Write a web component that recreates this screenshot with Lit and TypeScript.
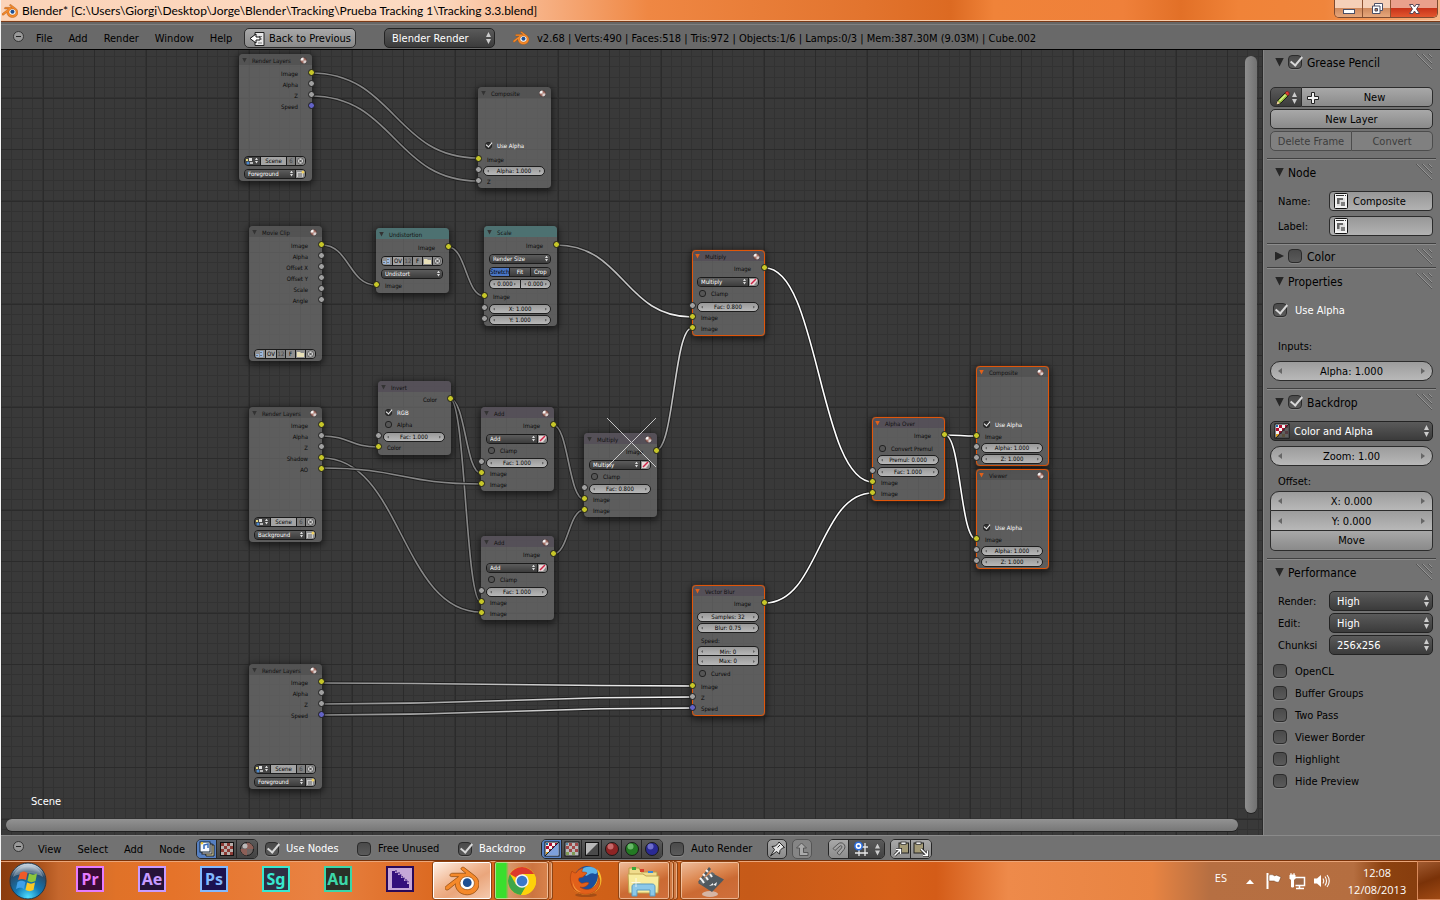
import { LitElement, html, svg, css, nothing } from "lit";
import { customElement, property } from "lit/decorators.js";
import { classMap } from "lit/directives/class-map.js";
import { styleMap } from "lit/directives/style-map.js";

/* ---------- shared icon drawings ---------- */

const blenderLogo = (size: number) => html`<svg width=${size} height=${size} viewBox="0 0 24 24" aria-hidden="true">
  <circle cx="15.7" cy="13" r="6" fill="#fff" />
  <path fill="#f5892a" stroke="#8a4408" stroke-width=".5" fill-rule="evenodd" d="M7.35 14.831c.006.314.106.922.256 1.398a7.372 7.372 0 0 0 1.593 2.757 8.227 8.227 0 0 0 2.787 2.001 8.947 8.947 0 0 0 3.66.76 8.964 8.964 0 0 0 3.657-.772 8.285 8.285 0 0 0 2.785-2.01 7.428 7.428 0 0 0 1.592-2.762 6.964 6.964 0 0 0 .25-3.074 7.123 7.123 0 0 0-1.016-2.779 7.764 7.764 0 0 0-1.852-2.043L13.566 2.55c-.492-.378-1.319-.376-1.86.002-.547.382-.609 1.015-.123 1.415l3.126 2.543-9.543.01c-.788.001-1.545.518-1.695 1.172-.154.665.38 1.217 1.2 1.22l4.83-.01-8.654 6.63c-.813.622-1.075 1.658-.563 2.315.52.667 1.625.668 2.447.004L7.414 14s-.069.52-.063.831zm12.09 1.741c-.97.988-2.326 1.548-3.795 1.55-1.47.004-2.827-.552-3.797-1.538a4.51 4.51 0 0 1-1.036-1.622 4.282 4.282 0 0 1 .282-3.519 4.702 4.702 0 0 1 1.153-1.371c.942-.768 2.141-1.183 3.396-1.185 1.256-.002 2.455.41 3.398 1.175.48.391.87.854 1.152 1.367a4.28 4.28 0 0 1 .522 1.706 4.236 4.236 0 0 1-.239 1.811 4.54 4.54 0 0 1-1.035 1.626" />
  <circle cx="15.7" cy="13.2" r="3.1" fill="#1d4f93" />
</svg>`;

const checker = (on: boolean) => svg`
  <rect x="1" y="1" width="14" height="14" fill=${on ? "#f4f4f4" : "#b9b9b9"} stroke="#111"/>
  <path fill=${on ? "#b01030" : "#a04848"} d="M5 2h3v3H5zM8 5h3v3H8zM2 5h3v3H2zM11 2h3v3h-3zM5 8h3v3H5zM11 8h3v3h-3z"/>
  <path fill=${on ? "#1c6fb4" : "#5c86a8"} d="M2 2h2v2H2z"/><path fill=${on ? "#e0a020" : "#7f9a55"} d="M2 11h3v3H2zM8 11h3v3H8z"/>`;

const icons: Record<string, unknown> = {
  back: svg`<path d="M6 1.500h9v13H6z" fill="#e9e9e9" stroke="#222"/><path d="M10 5.500h3M9 8h4M9 12h4" stroke="#777"/><path d="M7 3 1 7.500 7 12V9h4V6H7z" fill="#fff" stroke="#111"/>`,
  pencil: svg`<path d="M1.500 14.500 3 10l7.500-7.500 3 3L6 13z" fill="#93b83c" stroke="#1a1a1a"/><path d="m1.500 14.500 1-3.500 2.500 2.500z" fill="#f1d3a0"/><path d="m10 3 1.500-1.500c1.500-.6 3.200 1 2.700 2.700L13 6z" fill="#d83a35" stroke="#5c1010" stroke-width=".6"/><path d="m4.500 11 6-6" stroke="#dcef8d" stroke-width="1.300"/>`,
  plus: svg`<path d="M6.500 2.500h3v4h4v3h-4v4h-3v-4h-4v-3h4z" fill="#f2f2f2" stroke="#222"/>`,
  node: svg`<rect x="1.500" y=".5" width="13" height="15" rx="1" fill="#f3f3f3" stroke="#111"/><path d="M3 2.500h8M12 2.500h1" stroke="#333"/><path d="M4 5h8v8H4z" fill="#ddd"/><path d="M4 5h6v2H6.500v4H4z" fill="#666"/><path d="M8 9h4v4H8z" fill="#808080"/>`,
  coloralpha: svg`${checker(true)}<path d="M15 1v14H2z" fill="#444" opacity=".85"/><path d="M15 1 2 15" stroke="#222"/>`,
  images: svg`<path d="M5 4h10v11H7z" fill="#e8e0a8" stroke="#222"/><rect x="3" y="3" width="10" height="10" fill="#ddd" stroke="#222"/><rect x="1" y="1" width="10" height="10" fill="#f4f8ff" stroke="#123"/><path d="M5 8V4l4-1v4" fill="none" stroke="#3569b8" stroke-width="1.500"/><path d="m2 2.500 2-.5" stroke="#ecc52b" stroke-width="2"/>`,
  texture: svg`<rect x="1.500" y="1.500" width="13" height="13" fill="#b9b0ac" stroke="#111"/><path fill="#8b3a34" d="M2 2h3v3H2zM8 2h3v3H8zM5 5h3v3H5zM11 5h3v3h-3zM2 8h3v3H2zM8 8h3v3H8zM5 11h3v3H5zM11 11h3v3h-3z"/>`,
  sphere: svg`<circle cx="8" cy="8" r="6.500" fill="#6d6462" stroke="#1a1a1a"/><path d="M8 1.500A6.500 6.500 0 0 1 14.500 8H8zM8 8v6.500A6.500 6.500 0 0 1 1.500 8z" fill="#8c5f57"/><circle cx="6" cy="5" r="2.500" fill="#ddd" opacity=".7"/>`,
  alphatri: svg`${checker(true)}<path d="M14.500 2v12.500H2z" fill="#7da0dc"/><path d="M15 1 1 15" stroke="#123"/>`,
  checks: svg`${checker(false)}`,
  bw: svg`<rect x="1.500" y="1.500" width="13" height="13" fill="#4a4a4a" stroke="#111"/><path d="M2 2h12L2 14z" fill="#b9b9b9"/>`,
  red: svg`<circle cx="8" cy="8" r="6.500" fill="#8e2424" stroke="#1a1a1a"/><circle cx="6.500" cy="5.500" r="3" fill="#d98080" opacity=".75"/>`,
  green: svg`<circle cx="8" cy="8" r="6.500" fill="#237a23" stroke="#1a1a1a"/><circle cx="6.500" cy="5.500" r="3" fill="#80cc80" opacity=".75"/>`,
  blue: svg`<circle cx="8" cy="8" r="6.500" fill="#2a2a94" stroke="#1a1a1a"/><circle cx="6.500" cy="5.500" r="3" fill="#8585dd" opacity=".75"/>`,
  pin: svg`<path d="M10 1 15.500 6.500 13.500 7 11 9.500 10.500 13 7.500 10.500 1.500 15 5.500 8.500 3 5.500 6.500 5 9 2.500z" fill="#e6e6e6" stroke="#222"/><path d="m8.500 6.500 2.500-2.500" stroke="#222"/>`,
  up: svg`<path d="M7.500 2 2.500 7H5.500V14.500H14V11.500H9.500V7H12.500z" fill="#aaa" stroke="#555"/>`,
  magnet: svg`<path d="M2 7.500 7 3C11-.5 16 4.500 13 8.500L8.500 14 6 12l4.500-5C11.500 5 10 4 9 5L4 9.500z" fill="#a5a5a5" stroke="#555"/>`,
  snap: svg`<path d="M6 2v13M12 2v13M2 6h13M2 12h13" stroke="#e8e8e8" stroke-width="1.300"/><circle cx="5.500" cy="5" r="3.700" fill="#fff" stroke="#2a6ad8" stroke-width="1.600"/><circle cx="5.500" cy="5" r="1.300" fill="#2a6ad8"/>`,
  copy: svg`<rect x="6" y="2" width="9.500" height="10" fill="#a39a76" stroke="#222"/><rect x="8" y="1" width="5" height="2.500" fill="#eee" stroke="#222" stroke-width=".7"/><path d="M1.500 14.500 7 9M3 8.500h4.500V13" fill="none" stroke="#222" stroke-width="3"/><path d="M1.500 14.500 7 9M3 8.500h4.500V13" fill="none" stroke="#fff" stroke-width="1.500"/>`,
  paste: svg`<rect x="1" y="2" width="9.500" height="10" fill="#a39a76" stroke="#222"/><rect x="3" y="1" width="5" height="2.500" fill="#eee" stroke="#222" stroke-width=".7"/><path d="m8 8 6 6M14.500 9.500v5H10" fill="none" stroke="#222" stroke-width="3"/><path d="m8 8 6 6M14.500 9.500v5H10" fill="none" stroke="#fff" stroke-width="1.500"/>`,
};
const icon = (name: string) => html`<svg class="icon" width="16" height="16" viewBox="0 0 16 16" aria-hidden="true">${icons[name]}</svg>`;

/* ---------- node data ---------- */

type Row =
  | { t: "gap"; h: number }
  | { t: "fill" }
  | { t: "out" | "in"; s: string; c: string }
  | { t: "num"; s: string; sock?: boolean; part?: string }
  | { t: "sel"; s: string; ic?: string }
  | { t: "check"; s: string; on?: boolean }
  | { t: "text"; s: string }
  | { t: "scene" | "clip" | "modes" | "pair" };

const gap = (h: number): Row => ({ t: "gap", h });
const fill: Row = { t: "fill" };
const out = (s: string, c = "y"): Row => ({ t: "out", s, c });
const inp = (s: string, c = "y"): Row => ({ t: "in", s, c });
const num = (s: string, sock = false, part = ""): Row => ({ t: "num", s, sock, part });
const sel = (s: string, ic = ""): Row => ({ t: "sel", s, ic });
const check = (s: string, on = false): Row => ({ t: "check", s, on });

interface NodeDef {
  x: number; y: number; h: number; title: string;
  tint?: string; selected?: boolean; badge?: boolean; rows: Row[];
}

const layerNode = (x: number, y: number, h: number, lead: number, outs: Row[], pass: string): NodeDef => ({
  x, y, h, title: "Render Layers", tint: "plain", badge: true,
  rows: [gap(lead), ...outs, fill, { t: "scene" }, gap(2), sel(pass, "clap"), gap(2)],
});
const mixNode = (x: number, y: number, title: string, fac: string, selected = false): NodeDef => ({
  x, y, h: selected ? 86 : 84, title, tint: "color", badge: true, selected,
  rows: [gap(2), out("Image"), gap(2), sel(title, "img"), gap(1), check("Clamp"), gap(selected ? 2 : 1),
    num(fac, true), inp("Image"), inp("Image")],
});
const targetNode = (y: number, title: string): NodeDef => ({
  x: 976, y, h: 100, title, tint: "plain", badge: true, selected: true,
  rows: [fill, check("Use Alpha", true), gap(1), inp("Image"), num("Alpha: 1.000", true), num("Z: 1.000", true), gap(2)],
});

const NODES: NodeDef[] = [
  layerNode(239, 54, 127, 3, [out("Image"), out("Alpha", "g"), out("Z", "g"), out("Speed", "b")], "Foreground"),
  { x: 478, y: 87, h: 101, title: "Composite", tint: "plain", badge: true,
    rows: [fill, check("Use Alpha", true), gap(3), inp("Image"), num("Alpha: 1.000", true), inp("Z", "g"), gap(1)] },
  { x: 249, y: 226, h: 135, title: "Movie Clip", tint: "plain", badge: true,
    rows: [gap(3), out("Image"), out("Alpha", "g"), out("Offset X", "g"), out("Offset Y", "g"), out("Scale", "g"),
      out("Angle", "g"), fill, { t: "clip" }, gap(2)] },
  { x: 376, y: 228, h: 65, title: "Undistortion", tint: "distort",
    rows: [gap(3), out("Image"), gap(2), { t: "clip" }, gap(2), sel("Undistort"), gap(1), inp("Image")] },
  { x: 484, y: 226, h: 100, title: "Scale", tint: "distort",
    rows: [gap(3), out("Image"), gap(2), sel("Render Size"), gap(2), { t: "modes" }, gap(1), { t: "pair" }, gap(2),
      inp("Image"), gap(1), num("X: 1.000", true), num("Y: 1.000", true)] },
  layerNode(249, 407, 135, 2, [out("Image"), out("Alpha", "g"), out("Z", "g"), out("Shadow"), out("AO")], "Background"),
  { x: 378, y: 381, h: 74, title: "Invert", tint: "color",
    rows: [gap(2), out("Color"), gap(2), check("RGB", true), gap(1), check("Alpha"), gap(1), num("Fac: 1.000", true), inp("Color")] },
  mixNode(481, 407, "Add", "Fac: 1.000"),
  mixNode(481, 536, "Add", "Fac: 1.000"),
  mixNode(584, 433, "Multiply", "Fac: 0.800"),
  mixNode(692, 250, "Multiply", "Fac: 0.800", true),
  { x: 872, y: 417, h: 84, title: "Alpha Over", tint: "color", selected: true,
    rows: [gap(2), out("Image"), gap(2), check("Convert Premul"), num("Premul: 0.000"), gap(1), num("Fac: 1.000", true),
      inp("Image"), inp("Image")] },
  targetNode(366, "Composite"),
  targetNode(469, "Viewer"),
  { x: 692, y: 585, h: 131, title: "Vector Blur", tint: "color", selected: true,
    rows: [gap(2), out("Image"), gap(2), num("Samples: 32"), num("Blur: 0.75"), gap(2), { t: "text", s: "Speed:" },
      num("Min: 0", false, "top"), num("Max: 0", false, "bottom"), gap(2), check("Curved"), gap(2),
      inp("Image"), inp("Z", "g"), inp("Speed", "b")] },
  layerNode(249, 664, 125, 2, [out("Image"), out("Alpha", "g"), out("Z", "g"), out("Speed", "b")], "Foreground"),
];

/* x1, y1, x2, y2, whether each end is highlighted */
const LINKS: [number, number, number, number, number, number][] = [
  [311, 73, 478, 158, 0, 0], [311, 96, 478, 181, 0, 0],
  [322, 245, 376, 285, 0, 0], [448, 247, 484, 296, 0, 0],
  [556, 245, 692, 317, 0, 1], [656, 450, 692, 328, 0, 1],
  [450, 399, 481, 473, 0, 0], [450, 399, 481, 602, 0, 0],
  [322, 436, 378, 447, 0, 0], [322, 458, 481, 612, 0, 0], [322, 468, 481, 484, 0, 0],
  [553, 425, 584, 499, 0, 0], [553, 554, 584, 510, 0, 0],
  [765, 268, 873, 482, 1, 1], [765, 603, 873, 493, 1, 1],
  [945, 435, 976, 436, 1, 1], [945, 435, 976, 539, 1, 1],
  [322, 683, 692, 686, 0, 1], [322, 704, 692, 697, 0, 1], [322, 715, 692, 708, 0, 1],
];

/* ---------- node element ---------- */

@customElement("comp-node")
export class CompNode extends LitElement {
  @property({ attribute: false }) def!: NodeDef;

  static styles = css`
    :host { display: block; }
    * { box-sizing: border-box; }
    .node {
      position: relative; display: flex; flex-direction: column; width: 73px; height: 100%;
      border-radius: 4px; background: rgba(108, 108, 108, .7); color: #080808;
      font: 6px/11px "DejaVu Sans Condensed", "DejaVu Sans", sans-serif;
      box-shadow: 0 2px 6px 2px rgba(0, 0, 0, .5);
    }
    .selected::after { content: ""; position: absolute; inset: 0; border: 1px solid #e0560a; border-radius: 4px; box-shadow: 0 0 1px #d9560c; pointer-events: none; }
    .head {
      display: flex; align-items: center; gap: 5px; height: 11px; flex: none; padding: 1px 5px 0 3px;
      border-radius: 4px 4px 0 0; color: #111;
    }
    .plain { background: rgba(70, 70, 70, .4); }
    .color { background: rgba(78, 70, 84, .55); }
    .distort { background: rgba(72, 120, 120, .75); }
    .tri { width: 5px; height: 5px; background: #333; clip-path: polygon(0 0, 100% 0, 50% 100%); }
    .selected .tri { background: #e0601a; }
    .title { flex: 1; white-space: nowrap; }
    .row { position: relative; display: flex; align-items: center; height: 11px; flex: none; padding: 0 6px 0 5px; white-space: nowrap; }
    .fill { flex: 1; }
    .out { justify-content: flex-end; padding-right: 14px; }
    .in, .text { padding-left: 9px; }
    .sock { position: absolute; z-index: 1; top: 1px; width: 7px; height: 7px; border: 1px solid #1c1c1c; border-radius: 50%; }
    .left { left: -3px; }
    .right { right: -3px; }
    .y { background: #c7c729; } .g { background: #a1a1a1; } .b { background: #6363c7; }
    input, select, button { font: inherit; line-height: 8px; margin: 0; min-width: 0; }
    .num { position: relative; display: flex; width: 100%; height: 10px; }
    .num input {
      width: 100%; height: 100%; padding: 0; text-align: center; color: #000; border: 1px solid #1e1e1e;
      border-radius: 5px; background: linear-gradient(#999, #b8b8b8);
    }
    .num::before, .num::after { content: ""; position: absolute; top: 4px; width: 2px; height: 3px; background: #666; }
    .num::before { left: 4px; clip-path: polygon(100% 0, 100% 100%, 0 50%); }
    .num::after { right: 4px; clip-path: polygon(0 0, 100% 50%, 0 100%); }
    .tight { height: 10px; }
    .top input { border-radius: 4px 4px 0 0; }
    .bottom input { border-radius: 0 0 4px 4px; border-top: 0; }
    .start input { border-radius: 5px 0 0 5px; border-right: 0; }
    .end input { border-radius: 0 5px 5px 0; }
    .strip {
      display: flex; width: 100%; height: 10px; border: 1px solid #1b1b1b; border-radius: 4px; overflow: hidden;
      background: #444;
    }
    .strip > * { border: 0; border-left: 1px solid #1b1b1b; padding: 0; border-radius: 0; height: 8px; flex: none; }
    .strip > *:first-child { border-left: 0; }
    .drop { position: relative; flex: 1; display: flex; }
    .drop select {
      width: 100%; height: 8px; border: 0; border-radius: 0; padding: 0 8px 0 3px; appearance: none; color: #fff;
      background: linear-gradient(#5c5c5c, #3c3c3c);
    }
    .ud { position: absolute; right: 2px; top: 1px; width: 3px; height: 6px; background: #ddd;
      clip-path: polygon(50% 0, 100% 40%, 0 40%, 0 60%, 100% 60%, 50% 100%, 0 60%, 0 40%); }
    .pick { position: relative; width: 15px; background: #454545; }
    .field { flex: 1 1 0; width: 20px; background: #a4a4a4; color: #000; text-align: center; }
    .dim { width: 9px; background: #808080; color: #444; }
    .btn { width: 10px; background: #8e8e8e; color: #000; text-align: center; }
    .mini { display: block; width: 9px; height: 8px; }
    .modes > * { flex: 1; width: 0; background: linear-gradient(#5c5c5c, #3c3c3c); color: #fff; text-align: center; overflow: hidden; }
    .modes > .on { background: #4a76c4; color: #000; }
    .tick { display: flex; align-items: center; gap: 5px; padding-left: 2px; }
    .tick input {
      appearance: none; position: relative; width: 7px; height: 7px; border: 1px solid #222; border-radius: 3px; background: #555;
    }
    .tick input:checked { background: #333; }
    .tick input:checked::after {
      content: ""; position: absolute; left: 1px; top: -2px; width: 3px; height: 5px;
      border: solid #eee; border-width: 0 1px 1px 0; transform: rotate(40deg);
    }
    .tick input:checked + span { color: #fff; }
  `;

  private mini(kind: string) {
    const body: Record<string, unknown> = {
      img: svg`<path d="M1 1h7v6H1z" fill="#e8d8d8"/><path d="M5 7h3V3z" fill="#888"/><path d="M2 6 7 1" stroke="#c24" stroke-width="1.500"/>`,
      clap: svg`<rect x="1" y="2" width="6" height="5" fill="#ccc"/><path d="M2 4h4M2 6h4" stroke="#444" stroke-width=".8"/><circle cx="7" cy="2" r="1.500" fill="#f0d060"/>`,
      scene: svg`<path d="M1 2h2v2H1z" fill="#e4d87a"/><path d="M4 1h3v3H4z" fill="#ddd"/><circle cx="3" cy="6" r="1.500" fill="#4b8ad0"/><path d="M5 5h3v2H5z" fill="#bbb"/>`,
      clip: svg`<path d="M1 4h3v3H1zM5 1h3v6H5z" fill="#9bb8dd"/><path d="M2 5v1M6 2v1M6 5v1" stroke="#333"/>`,
      open: svg`<path d="M1 2h3l1 1h3v4H1z" fill="#e8e0b8"/>`,
      x: svg`<circle cx="4.500" cy="4" r="3.200" fill="#ccc" stroke="#333" stroke-width=".6"/><path d="m3 2.500 3 3M6 2.500l-3 3" stroke="#333" stroke-width=".9"/>`,
    };
    return html`<svg class="mini" viewBox="0 0 9 8" aria-hidden="true">${body[kind]}</svg>`;
  }

  private number(s: string, part = "") {
    return html`<span class="num ${part}"><input type="text" aria-label=${s} .value=${s} /></span>`;
  }

  private row(r: Row) {
    switch (r.t) {
      case "gap": return html`<div style=${styleMap({ height: `${r.h}px` })}></div>`;
      case "fill": return html`<div class="fill"></div>`;
      case "out": return html`<div class="row out">${r.s}<i class="sock right ${r.c}"></i></div>`;
      case "in": return html`<div class="row in"><i class="sock left ${r.c}"></i>${r.s}</div>`;
      case "text": return html`<div class="row text">${r.s}</div>`;
      case "num": return html`<div class="row ${r.part ? "tight" : ""}">
        ${r.sock ? html`<i class="sock left g"></i>` : nothing}${this.number(r.s, r.part)}</div>`;
      case "sel": return html`<div class="row"><div class="strip">
        <span class="drop"><select aria-label=${r.s}><option>${r.s}</option></select><i class="ud"></i></span>
        ${r.ic ? html`<button class="btn" aria-label="Browse">${this.mini(r.ic)}</button>` : nothing}</div></div>`;
      case "check": return html`<label class="row"><span class="tick">
        <input type="checkbox" .checked=${!!r.on} /><span>${r.s}</span></span></label>`;
      case "scene": return html`<div class="row"><div class="strip">
        <button class="pick" aria-label="Browse scene">${this.mini("scene")}<i class="ud"></i></button>
        <input class="field" aria-label="Scene" value="Scene" /><button class="dim">6</button>
        <button class="btn" aria-label="Unlink">${this.mini("x")}</button></div></div>`;
      case "clip": return html`<div class="row"><div class="strip">
        <button class="btn" aria-label="Browse clip">${this.mini("clip")}</button>
        <input class="field" aria-label="Clip" value="OV" /><button class="dim">12</button>
        <button class="btn">F</button><button class="btn" aria-label="Open">${this.mini("open")}</button>
        <button class="btn" aria-label="Unlink">${this.mini("x")}</button></div></div>`;
      case "modes": return html`<div class="row"><div class="strip modes">
        <button class="on">Stretch</button><button>Fit</button><button>Crop</button></div></div>`;
      case "pair": return html`<div class="row">${this.number("0.000", "start")}${this.number("0.000", "end")}</div>`;
    }
  }

  render() {
    const d = this.def;
    return html`<div class=${classMap({ node: true, selected: !!d.selected })}>
      <div class="head ${d.tint ?? "plain"}">
        <i class="tri"></i><span class="title">${d.title}</span>
        ${d.badge ? html`<svg width="7" height="7" viewBox="0 0 7 7" aria-hidden="true">
          <circle cx="3.500" cy="3.500" r="3" fill="#a8746a" stroke="#3a2a2a" stroke-width=".6" />
          <path d="M3.500.5a3 3 0 0 0-3 3h3z" fill="#f4f4f4" /><path d="M3.500 6.500a3 3 0 0 0 3-3h-3z" fill="#d8d0d0" /></svg>` : nothing}
      </div>
      ${d.rows.map((r) => this.row(r))}
    </div>`;
  }
}

/* ---------- application ---------- */

const ORIGIN = { x: 1, y: 50 };

@customElement("app-root")
export class AppRoot extends LitElement {
  static styles = css`
    :host {
      display: flex; flex-direction: column; height: 100vh; overflow: hidden; border-left: 1px solid #f4f4f4;
      box-sizing: border-box; background: #727272; color: #000;
      font: 11px/20px "DejaVu Sans Condensed", "DejaVu Sans", sans-serif;
    }
    * { box-sizing: border-box; }
    button, input, select { font: inherit; color: inherit; margin: 0; min-width: 0; }
    a { color: inherit; text-decoration: none; }
    .icon { display: block; flex: none; }

    /* window title */
    .titlebar {
      display: flex; align-items: center; height: 22px; flex: none; padding-left: 1px; gap: 4px;
      font: 12px/20px "Lato", "Open Sans", sans-serif; border-bottom: 1px solid #7a3a18;
      background: linear-gradient(90deg, #fbd3b8 0, #fcdac2 30%, #f6ae80 38%, #ef8743 45%, #e2742e 60%, #dc6a22 66%, #f08339 69%, #ef803a 78%, #e27027 82%, #f08338 86%, #f0853c 92%, #f7b688 100%);
      box-shadow: inset 0 -1px #f9cba8;
    }
    .titlebar .name { flex: 1; }
    .winbtns { display: flex; align-self: flex-start; height: 18px; margin-right: 2px; border: 1px solid #7d4a30; border-top: 0; border-radius: 0 0 5px 5px; overflow: hidden; }
    .winbtns button { width: 28px; border: 0; border-right: 1px solid #8d5232; padding: 0; display: grid; place-items: center; background: linear-gradient(#f5d0b8 0 45%, #cf8a5e 50%, #e6a77c); }
    .winbtns .close { width: 46px; border-right: 0; background: linear-gradient(#eaa08c 0 45%, #c8341a 50%, #e2572f); }

    /* header strips */
    .bar { display: flex; align-items: center; flex: none; padding-left: 12px; }
    .info { height: 28px; padding-top: 5px; background: linear-gradient(#666 2px, #808080 2px 3px, #696969 3px); border-bottom: 1px solid #000; }
    .footer { height: 25px; background: #727272; border-top: 1px solid #8a8a8a; padding-top: 1px; }
    .collapse { width: 11px; height: 11px; flex: none; margin-bottom: 4px; padding: 0; border: 1px solid #333; border-radius: 50%; background: #999; position: relative; }
    .collapse::after { content: ""; position: absolute; left: 2px; top: 4px; width: 5px; height: 1px; background: #222; }
    .menus { display: flex; gap: 16px; padding: 2px 0 0 12px; }
    .info .menus { width: 220px; }
    .footmenus { padding-left: 14px; width: 172px; }
    .btn {
      display: flex; align-items: center; justify-content: center; gap: 4px; height: 20px; padding: 1px 4px 0;
      border: 1px solid #2c2c2c; border-radius: 5px; background: linear-gradient(#a8a8a8, #8a8a8a); white-space: nowrap;
    }
    .back { width: 112px; padding: 1px 2px 0; }
    .engine { width: 111px; margin: 0 18px 0 28px; }
    .stats { padding: 2px 0 0 8px; white-space: nowrap; }
    .dropdown { position: relative; display: flex; height: 20px; color: #fff; }
    .dropdown select {
      appearance: none; width: 100%; height: 20px; padding: 2px 16px 0 7px; border: 1px solid #232323; border-radius: 5px;
      background: linear-gradient(#5a5a5a, #3b3b3b); line-height: 16px;
    }
    .ud { position: absolute; right: 4px; top: 4px; width: 5px; height: 12px; background: #ccc;
      clip-path: polygon(50% 0, 100% 42%, 0 42%, 0 58%, 100% 58%, 50% 100%, 0 58%, 0 42%); }

    .tick { display: flex; align-items: center; gap: 7px; height: 20px; white-space: nowrap; }
    .tick span { padding-top: 1px; }
    .tick input {
      appearance: none; position: relative; flex: none; width: 14px; height: 14px; border: 1px solid #2b2b2b; border-radius: 4px;
      background: linear-gradient(#4a4a4a, #5a5a5a); box-shadow: 0 1px #858585;
    }
    .tick input:checked::after {
      content: ""; position: absolute; left: 4px; top: -2px; width: 5px; height: 10px;
      border: solid #d8d8d8; border-width: 0 2px 2px 0; transform: rotate(40deg);
    }
    .lit { color: #fff; }
    .group { display: flex; height: 20px; border: 1px solid #262626; border-radius: 5px; overflow: hidden; }
    .group button { display: grid; place-items: center; width: 20px; padding: 0; border: 0; border-right: 1px solid #262626; background: linear-gradient(#5a5a5a, #424242); }
    .group button:last-child { border-right: 0; }
    .group .on { background: #5680c2; }
    .group .pale { background: linear-gradient(#a8a8a8, #8c8c8c); }
    .group .wide { position: relative; width: 35px; padding-right: 12px; }
    .square { width: 20px; padding: 0; }
    .faint { border-color: #555; background: #858585; }
    .t92 { width: 92px; } .t101 { width: 101px; } .t83 { width: 83px; } .t97 { width: 97px; }
    .gap7 { margin-left: 7px; } .gap5 { margin-left: 5px; } .gap16 { margin-left: 16px; }

    /* editor */
    .main { display: flex; flex: 1; min-height: 0; }
    .editor { position: relative; flex: 1; min-width: 0; overflow: hidden; background: #393939; }
    .layer { position: absolute; inset: 0; width: 100%; height: 100%; pointer-events: none; }
    .editor comp-node { position: absolute; }
    .scene { position: absolute; left: 30px; bottom: 23px; color: #fff; }
    .scroll { position: absolute; border-radius: 6px; }
    .vert { right: 5px; top: 6px; bottom: 22px; width: 12px; background: linear-gradient(90deg, #8e8e8e, #717171); box-shadow: 0 1px #222; }
    .horz { left: 5px; right: 24px; bottom: 4px; height: 12px; background: linear-gradient(#929292, #777); box-shadow: 0 1px #222; }

    /* properties region */
    .side { width: 178px; flex: none; overflow: hidden; background: #727272; border-left: 1px solid #2a2a2a; box-shadow: inset 1px 0 #858585; }
    .panel { margin: 0 4px 1px; padding: 0 3px 7px; border-bottom: 1px solid #404040; box-shadow: 0 1px #8c8c8c; }
    .panel:last-child { border-bottom: 0; box-shadow: none; }
    .closed { padding-bottom: 0; }
    .phead { display: flex; align-items: center; gap: 4px; height: 24px; padding-left: 5px; position: relative; font-size: 12px; }
    .phead > span { padding-top: 1px; }
    .closed .phead { height: 22px; }
    .phead .tick { gap: 5px; }
    .arrow { width: 9px; height: 9px; background: #262626; clip-path: polygon(0 0, 100% 0, 50% 100%); }
    .shut { clip-path: polygon(0 0, 100% 50%, 0 100%); }
    .grip { position: absolute; right: 0; top: 3px; }
    .pbody { display: grid; gap: 2px; padding-top: 7px; }
    .roomy { padding-top: 13px; }
    .loose { gap: 5px; }
    .join { display: flex; }
    .join .btn { flex: 1; }
    .join > :first-child { border-radius: 5px 0 0 5px; }
    .join > :last-child { border-radius: 0 5px 5px 0; border-left: 0; }
    .join .brush { position: relative; flex: none; width: 32px; justify-content: flex-start; background: linear-gradient(#5a5a5a, #3b3b3b); }
    .join .new { padding-left: 3px; }
    .new span { flex: 1; padding-right: 4px; }
    .off { color: #3d3d3d; background: #808080; border-color: #4c4c4c; }
    .field { display: grid; grid-template-columns: 51px 1fr; padding-left: 8px; align-items: center; white-space: nowrap; }
    .field > span:first-child { overflow: hidden; padding-top: 1px; height: 20px; }
    .id { position: relative; display: flex; }
    .id .icon { position: absolute; left: 4px; top: 2px; }
    .id input { width: 100%; height: 20px; padding: 1px 4px 0 23px; border: 1px solid #2c2c2c; border-radius: 4px; background: linear-gradient(#979797, #b2b2b2); }
    .num { position: relative; display: flex; height: 20px; }
    .num input { width: 100%; height: 20px; padding: 2px 0 0; text-align: center; border: 1px solid #2c2c2c; border-radius: 10px; background: linear-gradient(#9c9c9c, #b8b8b8); }
    .num::before, .num::after { content: ""; position: absolute; top: 7px; width: 4px; height: 6px; background: #666; }
    .num::before { left: 8px; clip-path: polygon(100% 0, 100% 100%, 0 50%); }
    .num::after { right: 8px; clip-path: polygon(0 0, 100% 50%, 0 100%); }
    .stack { display: grid; }
    .stack .first input { border-radius: 9px 9px 0 0; }
    .stack .mid input { border-radius: 0; border-top: 0; }
    .stack .btn { border-radius: 0 0 5px 5px; border-top: 0; }
    .label { padding: 1px 0 0 8px; height: 20px; }
    .indent { padding-left: 3px; }
    .inputs { padding-top: 12px; height: 31px; }
    .withicon select { padding-left: 23px; }
    .withicon .icon { position: absolute; left: 4px; top: 2px; z-index: 1; }
    .checks { display: grid; gap: 2px; padding: 4px 0 0 3px; }
    .checks .tick, .indent { gap: 8px; }

    /* taskbar */
    .taskbar {
      display: flex; align-items: center; height: 40px; flex: none; border-top: 1px solid #7a3208;
      box-shadow: inset 0 1px #eaa67a; color: #fff; font: 12px/17px "Open Sans", sans-serif;
      background: linear-gradient(90deg, #8a3c0e 0, #9b4612 2%, #c5672d 4%, #e07228 8%, #e5732a 12%, #e98242 22%, #dc6a22 30%, #cf6018 42%, #c65a18 52%, #d66019 62%, #d45c18 65%, #ee8a4a 70%, #e88442 80%, #b66f42 84%, #b56e40 94%, #8c4210 96%, #843a0c 100%);
    }
    .orb { width: 38px; height: 38px; margin: 0 29px 0 8px; padding: 0; border: 0; background: none; }
    .apps { display: flex; gap: 34px; margin: 0 18px 3px 0; }
    .adobe {
      display: grid; place-items: center; width: 28px; height: 26px; padding: 0; border: 2px solid;
      font: bold 16px/20px "Noto Sans", "Open Sans", sans-serif;
    }
    .pr { color: #e57bff; background: #3a0b35; } .ae { color: #c89bff; background: #261338; }
    .ps { color: #82b9ff; background: #1c1250; } .sg { color: #38e8d0; background: #2f2f45; }
    .au { color: #3cd6a8; background: #2a2f28; } .me { border-color: #2a0a58; background: #c6a8d8; }
    .task { display: grid; place-items: center; height: 39px; padding: 0; border: 1px solid #8d4313; border-radius: 3px; box-shadow: inset 0 0 0 1px rgba(255, 225, 200, .6); background: linear-gradient(160deg, #eebd9c, #dc8750 40%, #cb6a33 60%, #d0703c); }
    .active { width: 60px; background: linear-gradient(150deg, #fff2e8, #f0b48e 45%, #eaa67c 60%, #f5cbb0); box-shadow: inset 0 0 0 1px #fff; }
    .chrome { width: 55px; margin-left: 2px; background: linear-gradient(90deg, #3adf2d 0 20%, #d9966a 26%, #cc7440 70%, #d8834c); }
    .edge { width: 4px; height: 39px; border: 1px solid #8d4313; border-left: 0; border-radius: 0 3px 3px 0; box-shadow: inset -1px 0 rgba(255, 225, 200, .5); background: #d07a44; }
    .plainapp { width: 65px; height: 39px; padding: 0; border: 0; background: none; display: grid; place-items: center; }
    .files { width: 52px; } .clap { width: 60px; margin-left: 2px; }
    .tray { display: flex; align-items: center; margin-left: auto; height: 100%; }
    .tray .lang { margin-right: 15px; padding-bottom: 6px; font-size: 11px; }
    .tray svg { display: block; margin-right: 7px; }
    .clock { width: 78px; text-align: center; margin-left: 1px; font-size: 11px; }
    .desk { width: 23px; height: 39px; margin-left: 1px; padding: 0; border: 1px solid #d98a5c; border-right: 0; background: linear-gradient(160deg, #a05a30, #7a3208 50%, #a04a14); }
  `;

  private gridPath(start: number, step: number, end: number, vertical: boolean) {
    let d = "";
    for (let i = 0, p = start; p < end; i++, p = start + i * step) {
      const q = Math.round(p) + 0.5;
      d += vertical ? `M${q} 0V2000` : `M0 ${q}H4000`;
    }
    return d;
  }

  private grid() {
    return html`<svg class="layer" aria-hidden="true">
      <path stroke="#323232" d=${this.gridPath(0, 10.3, 4000, true) + this.gridPath(6, 10.3, 2000, false)} />
      <path stroke="#2b2b2b" d=${this.gridPath(41.7, 51.5, 4000, true) + this.gridPath(47.500, 51.5, 2000, false)} />
    </svg>`;
  }

  private links() {
    const tone = (on: number) => (on ? "#ffffff" : "#868686");
    return html`<svg class="layer" aria-hidden="true">
      ${LINKS.map(([ax, ay, bx, by, a, b], i) => {
        const [x1, y1, x2, y2] = [ax - ORIGIN.x, ay - ORIGIN.y, bx - ORIGIN.x, by - ORIGIN.y];
        const m = (x2 - x1) / 2;
        const d = `M${x1} ${y1}C${x1 + m} ${y1} ${x2 - m} ${y2} ${x2} ${y2}`;
        return svg`<linearGradient id="l${i}" gradientUnits="userSpaceOnUse" x1=${x1} y1="0" x2=${x2} y2="0">
            <stop offset="0" stop-color=${tone(a)}/><stop offset="1" stop-color=${tone(b)}/></linearGradient>
          <path d=${d} fill="none" stroke="#1a1a1a" stroke-width="3.500" opacity=".8"/>
          <path d=${d} fill="none" stroke="url(#l${i})" stroke-width="1.600"/>`;
      })}
    </svg>`;
  }

  private tick(text: string, on = false, cls = "") {
    return html`<label class="tick ${cls} ${on ? "lit" : ""}"><input type="checkbox" .checked=${on} /><span>${text}</span></label>`;
  }
  private select(text: string, cls = "", ic = "") {
    return html`<span class="dropdown ${cls}">${ic ? icon(ic) : nothing}<select aria-label=${text}><option>${text}</option></select><i class="ud"></i></span>`;
  }
  private number(text: string, cls = "") {
    return html`<span class="num ${cls}"><input type="text" aria-label=${text} .value=${text} /></span>`;
  }
  private head(text: string, opts: { shut?: boolean; check?: boolean } = {}) {
    return html`<div class="phead"><i class="arrow ${opts.shut ? "shut" : ""}"></i>
      ${opts.check === undefined ? html`<span>${text}</span>`
        : html`<label class="tick"><input type="checkbox" .checked=${opts.check} /><span>${text}</span></label>`}
      <svg class="grip" width="18" height="18" viewBox="0 0 18 18" aria-hidden="true">
        <path d="M1 1l16 16M7 1l10 10M13 1l4 4" stroke="#555" /><path d="M2 1l15 15M8 1l9 9M14 1l3 3" stroke="#959595" /></svg></div>`;
  }

  private sidebar() {
    return html`<aside class="side">
      <section class="panel">${this.head("Grease Pencil", { check: true })}
        <div class="pbody roomy">
          <div class="join"><button class="btn brush" aria-label="Browse grease pencil">${icon("pencil")}<i class="ud"></i></button>
            <button class="btn new">${icon("plus")}<span>New</span></button></div>
          <button class="btn">New Layer</button>
          <div class="join"><button class="btn off">Delete Frame</button><button class="btn off">Convert</button></div>
        </div></section>
      <section class="panel">${this.head("Node")}
        <div class="pbody loose">
          <label class="field"><span>Name:</span><span class="id">${icon("node")}<input value="Composite" /></span></label>
          <label class="field"><span>Label:</span><span class="id">${icon("node")}<input value="" /></span></label>
        </div></section>
      <section class="panel closed">${this.head("Color", { shut: true, check: false })}</section>
      <section class="panel">${this.head("Properties")}
        <div class="pbody loose">
          ${this.tick("Use Alpha", true, "indent")}
          <div class="label inputs">Inputs:</div>
          ${this.number("Alpha: 1.000")}
        </div></section>
      <section class="panel">${this.head("Backdrop", { check: true })}
        <div class="pbody loose">
          ${this.select("Color and Alpha", "withicon", "coloralpha")}
          ${this.number("Zoom: 1.00")}
          <div><div class="label">Offset:</div>
            <div class="stack">${this.number("X: 0.000", "first")}${this.number("Y: 0.000", "mid")}<button class="btn">Move</button></div></div>
        </div></section>
      <section class="panel">${this.head("Performance")}
        <div class="pbody">
          ${[["Render:", "High"], ["Edit:", "High"], ["Chunksi", "256x256"]].map(([l, v]) =>
            html`<div class="field"><span>${l}</span>${this.select(v)}</div>`)}
          <div class="checks">${["OpenCL", "Buffer Groups", "Two Pass", "Viewer Border", "Highlight", "Hide Preview"].map((t) => this.tick(t))}</div>
        </div></section>
    </aside>`;
  }

  private taskbar() {
    const adobe = [["pr", "Pr"], ["ae", "Ae"], ["ps", "Ps"], ["sg", "Sg"], ["au", "Au"]];
    return html`<nav class="taskbar">
      <button class="orb" aria-label="Start"><svg width="38" height="38" viewBox="0 0 38 38">
        <defs><radialGradient id="orb" cx=".5" cy=".95" r=".9"><stop offset="0" stop-color="#4fe0ff"/><stop offset=".4" stop-color="#1278b4"/><stop offset=".8" stop-color="#2a4a68"/><stop offset="1" stop-color="#c0d0dc"/></radialGradient></defs>
        <circle cx="19" cy="19" r="18" fill="url(#orb)" stroke="#20384c"/><path d="M4 15a15.500 15.500 0 0 1 30 0c-8-5-22-5-30 0z" fill="#fff" opacity=".3"/>
        <path d="M11 11c3-2 5-2 7.500 0L17 18c-3-1.500-5-1.500-8 0z" fill="#ee5a28"/><path d="M20 11.500c3 1.500 5 1.500 8 0L26.500 19c-3 1.500-5 1.500-8 0z" fill="#8cc63e"/>
        <path d="M8.500 20c3-2 5-1.500 8 0L15 27c-3-2-5-1.500-8 0z" fill="#3fa0e8"/><path d="M18 20.500c3 1.500 5 1.500 8 0L24.500 28c-3 1.500-5 1.500-8 0z" fill="#fcc824"/></svg></button>
      <div class="apps">
        ${adobe.map(([c, t]) => html`<button class="adobe ${c}">${t}</button>`)}
        <button class="adobe me" aria-label="Media Encoder"><svg width="24" height="22" viewBox="0 0 24 22"><path d="M4 3h3v2h3v2h3v3h3v3h3v3h2v4H4z" fill="#34107c"/><path d="M10 5h2v2h2v2h2v2h2v2h2v2M7 3h2v2" fill="none" stroke="#34107c" stroke-dasharray="2 1.500"/></svg></button>
      </div>
      <button class="task active" aria-label="Blender">${blenderLogo(34)}</button>
      <button class="task chrome" aria-label="Chrome"><svg width="30" height="30" viewBox="0 0 30 30">
        <circle cx="15" cy="15" r="14" fill="#fdd20a"/><path d="M15 15 2.900 8A14 14 0 0 1 27.100 8H15z" fill="#dd3a2c"/><path d="M15 15 9 18.500 2.900 8A14 14 0 0 0 14 29l6-10.500z" fill="#3fa648"/><path d="M15 8h12.100A14 14 0 0 1 14 29l6.500-11z" fill="#fdd20a"/>
        <circle cx="15" cy="15" r="6.800" fill="#f4f4f4"/><circle cx="15" cy="15" r="5.300" fill="#3a78c8"/></svg></button><i class="edge"></i>
      <button class="plainapp" aria-label="Firefox"><svg width="34" height="34" viewBox="0 0 34 34">
        <ellipse cx="17" cy="31" rx="11" ry="2" fill="#7a3a14" opacity=".5"/>
        <circle cx="18" cy="14" r="12" fill="#1c4f9c"/><path d="M11 7c4-5 12-6 17-1 1 2 0 4-2 4-4-2-6 1-9 2-2-3-4-3-6-5z" fill="#5cb4ea"/>
        <path d="M28 5c5 5 6 13 2 19-6 8-18 9-25 2 8 3 16 1 20-4 4-5 5-11 3-17z" fill="#f8c030"/>
        <path d="M3 7c1 1 2 2 4 2 2-3 4-4 7-5-1 2-1 3-1 4 2 0 4 0 5 1-1 2-3 2-4 4l-4 1c-1 2 0 4 2 5 3 1 5-2 8 0-2 4-6 5-9 4 5 4 12 3 16-2 2-3 3-7 2-10 4 7 1 15-6 18-9 4-19-1-21-10C1 15 1 11 3 7z" fill="#e2601a" stroke="#a83c10" stroke-width=".6"/>
        <path d="M4 16c-.5 5 3 10 8 12-6 0-9-6-8-12z" fill="#f79a3a"/></svg></button>
      <button class="task files" aria-label="Explorer"><svg width="34" height="32" viewBox="0 0 34 32">
        <path d="M2 3h10l2 4h16v20H2z" fill="#f0dc8c" stroke="#b89a48"/><path d="M5 2h4v3H5z" fill="#3aa83a"/><path d="M13 4h4v3h-4z" fill="#d8402a"/><path d="M21 6h5v2h-5z" fill="#3a8ad8"/><path d="M1 9h15l3 2h13l-1 17H2z" fill="#f8ec9e" stroke="#c0a450"/>
        <path d="M5 31V22c0-2 1-3 3-3h17c2 0 3 1 3 3v9h-5v-6H10v6z" fill="#8cc8e8" stroke="#5a9ac0"/><path d="M9 13v9M4.500 17.500h9" stroke="#fff" opacity=".7"/></svg></button><i class="edge"></i><i class="edge"></i>
      <button class="task clap" aria-label="Clapper"><svg width="32" height="32" viewBox="0 0 32 32">
        <ellipse cx="16" cy="29" rx="8" ry="3" fill="#d8c8c0" opacity=".8"/><path d="M18 8 30 14.500 18 27 4 18z" fill="#50585e"/>
        <path d="M4 17 15 2l2 2L6 18z" fill="#50585e"/><path d="M5 17 18 7l3 2L8 20z" fill="#62696e"/>
        <path d="m6 13 2 2M9 9l2 2M12 5l2 2M8 15l2 3M12 12l2 3M16 9l2 3" stroke="#f2f2f2" stroke-width="2"/><path d="m15 21 4-3v2l4-3-1 4-2-1z" fill="#eee"/></svg></button>
      <div class="tray">
        <span class="lang">ES</span>
        <svg width="16" height="16" viewBox="0 0 16 16"><path d="M4 11h8L8 6.500z" fill="#fff"/></svg>
        <svg width="17" height="18" viewBox="0 0 17 18"><path d="M2.500 1v16" stroke="#fff" stroke-width="2"/><path d="M4 3c3-1 4 0 6 1l1-1 5 2-2 5c-3 1-4-1-5-1H4z" fill="#fff" stroke="#6a3818" stroke-width=".5"/></svg>
        <svg width="17" height="18" viewBox="0 0 17 18"><path d="M4.500 5.500h11v8h-9M7 16.500h8M10.500 13v3" fill="#a06a48" stroke="#fff" stroke-width="1.500"/><path d="M1 3h5v4H4.500v8h-2V7H1zM2 1v2M5 1v2" fill="#fff" stroke="#fff"/></svg>
        <svg width="17" height="18" viewBox="0 0 17 18"><path d="M1 6.500h3L8 3v12l-4-3.500H1z" fill="#fff"/><path d="M10 6.500c1 1.500 1 3.500 0 5M12 4.500c2 2.500 2 6.500 0 9M14 3c3 3.500 3 8.500 0 12" fill="none" stroke="#fff" stroke-width="1.100"/></svg>
        <div class="clock">12:08<br />12/08/2013</div>
        <button class="desk" aria-label="Show desktop"></button>
      </div>
    </nav>`;
  }

  render() {
    return html`
      <header class="titlebar">${blenderLogo(16)}
        <span class="name">Blender* [C:\\Users\\Giorgi\\Desktop\\Jorge\\Blender\\Tracking\\Prueba Tracking 1\\Tracking 3.3.blend]</span>
        <span class="winbtns">
          <button aria-label="Minimize"><svg width="14" height="12" viewBox="0 0 14 12"><rect x="1.500" y="6.500" width="11" height="4" fill="#fff" stroke="#4a4f66"/></svg></button>
          <button aria-label="Restore"><svg width="14" height="13" viewBox="0 0 14 13"><path d="M4.500 1.500h8v7h-8z" fill="#fff" stroke="#4a4f66"/><path d="M2.500 4h7.500v7.500H2.500z" fill="#fff" stroke="#4a4f66"/><path d="M5 6.500h2.500V9H5z" fill="#c07a50" stroke="#4a4f66"/></svg></button>
          <button class="close" aria-label="Close"><svg width="13" height="12" viewBox="0 0 13 12"><path d="M1.500 1.500H5L6.500 4 8 1.500h3.500L8.500 6l3 4.500H8L6.500 8 5 10.500H1.500l3-4.500z" fill="#fff" stroke="#5a4a58"/></svg></button>
        </span>
      </header>
      <div class="bar info">
        <button class="collapse" aria-label="Collapse menus"></button>
        <nav class="menus">${["File", "Add", "Render", "Window", "Help"].map((m) => html`<a href="#">${m}</a>`)}</nav>
        <button class="btn back">${icon("back")}<span>Back to Previous</span></button>
        ${this.select("Blender Render", "engine")}
        ${blenderLogo(16)}
        <span class="stats">v2.68 | Verts:490 | Faces:518 | Tris:972 | Objects:1/6 | Lamps:0/3 | Mem:387.30M (9.03M) | Cube.002</span>
      </div>
      <div class="main">
        <main class="editor">
          ${this.grid()}${this.links()}
          ${NODES.map((d) => html`<comp-node .def=${d}
            style=${styleMap({ left: `${d.x - ORIGIN.x}px`, top: `${d.y - ORIGIN.y}px`, height: `${d.h}px` })}></comp-node>`)}
          <svg class="layer" aria-hidden="true"><path d="M606 368l49 49M655 368l-49 49" stroke="#e8e8e8" stroke-width="1" opacity=".8" /></svg>
          <span class="scene">Scene</span>
          <i class="scroll vert"></i><i class="scroll horz"></i>
        </main>
        ${this.sidebar()}
      </div>
      <div class="bar footer">
        <button class="collapse" aria-label="Collapse menus"></button>
        <nav class="menus footmenus">${["View", "Select", "Add", "Node"].map((m) => html`<a href="#">${m}</a>`)}</nav>
        <div class="group"><button class="on" aria-label="Compositing">${icon("images")}</button><button aria-label="Texture">${icon("texture")}</button><button aria-label="Shader">${icon("sphere")}</button></div>
        ${this.tick("Use Nodes", true, "t92 gap7")}${this.tick("Free Unused", false, "t101")}${this.tick("Backdrop", true, "t83")}
        <div class="group"><button class="on" aria-label="Color and alpha">${icon("alphatri")}</button>
          ${["checks", "bw", "red", "green", "blue"].map((n) => html`<button aria-label=${n}>${icon(n)}</button>`)}</div>
        ${this.tick("Auto Render", false, "t97 gap7")}
        <button class="btn square" aria-label="Pin">${icon("pin")}</button>
        <button class="btn square faint gap5" aria-label="Parent">${icon("up")}</button>
        <div class="group gap16"><button class="pale" aria-label="Snap">${icon("magnet")}</button><button class="wide" aria-label="Snap element">${icon("snap")}<i class="ud"></i></button></div>
        <div class="group gap5"><button class="pale" aria-label="Copy">${icon("copy")}</button><button class="pale" aria-label="Paste">${icon("paste")}</button></div>
      </div>
      ${this.taskbar()}`;
  }
}
